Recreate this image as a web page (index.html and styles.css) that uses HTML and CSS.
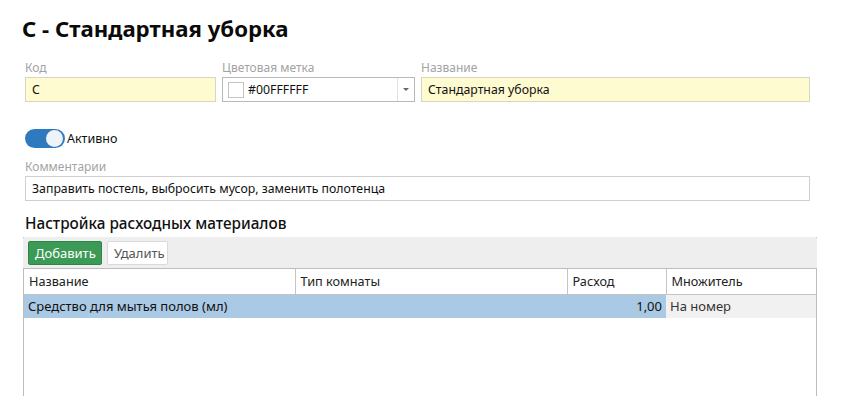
FILE: index.html
```html
<!DOCTYPE html>
<html lang="ru">
<head>
    <meta charset="UTF-8">
    <title>С - Стандартная уборка</title>
    <link rel="stylesheet" href="styles.css">
</head>
<body>
    <div class="page">
        <h1 class="title">С - Стандартная уборка</h1>

        <div class="row">
            <div class="field field-code">
                <label class="label">Код</label>
                <div class="input input-req">С</div>
            </div>
            <div class="field field-color">
                <label class="label">Цветовая метка</label>
                <div class="input select">
                    <span class="swatch"></span>
                    <span class="select-value">#00FFFFFF</span>
                    <span class="select-btn"><span class="caret"></span></span>
                </div>
            </div>
            <div class="field field-name">
                <label class="label">Название</label>
                <div class="input input-req">Стандартная уборка</div>
            </div>
        </div>

        <div class="toggle-row">
            <span class="toggle"><span class="knob"></span></span>
            <span class="toggle-text">Активно</span>
        </div>

        <div class="field field-comment">
            <label class="label">Комментарии</label>
            <div class="input">Заправить постель, выбросить мусор, заменить полотенца</div>
        </div>

        <h2 class="subtitle">Настройка расходных материалов</h2>

        <div class="grid-box">
            <div class="toolbar">
                <button class="btn btn-green">Добавить</button>
                <button class="btn btn-plain">Удалить</button>
            </div>
            <table class="table">
                <thead>
                    <tr>
                        <th class="col-name">Название</th>
                        <th class="col-type">Тип комнаты</th>
                        <th class="col-qty">Расход</th>
                        <th class="col-mult">Множитель</th>
                    </tr>
                </thead>
                <tbody>
                    <tr class="selected">
                        <td>Средство для мытья полов (мл)</td>
                        <td></td>
                        <td class="num">1,00</td>
                        <td class="ro">На номер</td>
                    </tr>
                </tbody>
            </table>
            <div class="table-empty"></div>
        </div>
    </div>
</body>
</html>
```

FILE: styles.css
```css
* {
    box-sizing: border-box;
}

body {
    margin: 0;
    background: #ffffff;
    font-family: "Noto Sans", "Open Sans", sans-serif;
    font-size: 13px;
    color: #111111;
    overflow: hidden;
}

.page {
    padding: 14px 25px 0 25px;
    width: 842px;
}

.title {
    margin: 0 0 0 -3px;
    font-size: 22.2px;
    font-weight: 700;
    line-height: 30px;
    color: #0a0a0a;
}

.row {
    display: flex;
    gap: 6px;
    margin-top: 15px;
    width: 785px;
}

.field {
    display: flex;
    flex-direction: column;
}

.field-code {
    width: 191px;
}

.field-color {
    width: 193px;
}

.field-name {
    flex: 1;
}

.label {
    font-size: 12px;
    line-height: 18px;
    color: #a3a3a3;
}

.input {
    height: 25px;
    border: 1px solid #cfcfcf;
    background: #ffffff;
    padding: 0 6px;
    font-size: 12.3px;
    line-height: 23px;
    white-space: nowrap;
}

.input-req {
    background: #fffbd0;
    border-color: #d8d6c0;
}

.select {
    display: flex;
    align-items: center;
    padding: 0 0 0 5px;
    border-color: #b9b9b9;
}

.swatch {
    width: 16px;
    height: 16px;
    border: 1px solid #c4c4c4;
    background: #ffffff;
    margin-right: 4px;
}

.select-value {
    flex: 1;
}

.select-btn {
    width: 17px;
    height: 23px;
    border-left: 1px solid #e2e2e2;
    display: flex;
    align-items: center;
    justify-content: center;
}

.caret {
    width: 0;
    height: 0;
    border-left: 3px solid transparent;
    border-right: 3px solid transparent;
    border-top: 3px solid #666666;
}

.toggle-row {
    display: flex;
    align-items: center;
    margin-top: 27px;
    height: 19px;
}

.toggle {
    width: 40px;
    height: 19px;
    border-radius: 10px;
    background: #2f79be;
    position: relative;
    display: inline-block;
}

.knob {
    position: absolute;
    right: 2px;
    top: 1px;
    width: 17px;
    height: 17px;
    border-radius: 50%;
    background: #eef3f8;
}

.toggle-text {
    margin-left: 2px;
    font-size: 12.5px;
}

.field-comment {
    margin-top: 10px;
    width: 785px;
}

.subtitle {
    margin: 11px 0 0 0;
    font-size: 15.3px;
    font-weight: 500;
    line-height: 22px;
    color: #111111;
}

.grid-box {
    margin: 3px 0 0 -2px;
    width: 794px;
    border-left: 1px solid #bdbdbd;
    border-right: 1px solid #bdbdbd;
}

.toolbar {
    background: #eeeeee;
    height: 32px;
    margin: 0 -1px;
    padding: 4px 5px;
    display: flex;
    gap: 5px;
    border-bottom: 1px solid #bdbdbd;
    border-radius: 2px 2px 0 0;
}

.btn {
    height: 24px;
    font-family: inherit;
    font-size: 13px;
    padding: 0 6px;
    border-radius: 2px;
    cursor: pointer;
}

.btn-green {
    background: #3b9a55;
    color: #ffffff;
    border: 1px solid #2f8548;
    width: 74px;
}

.btn-plain {
    background: #ffffff;
    color: #555555;
    border: 1px solid #dadada;
    width: 61px;
}

.table {
    width: 100%;
    border-collapse: collapse;
    table-layout: fixed;
}

.table th {
    font-weight: 400;
    text-align: left;
    height: 25px;
    padding: 0 5px;
    font-size: 12.7px;
    border-right: 1px solid #c4c4c4;
    border-bottom: 1px solid #c4c4c4;
    color: #222222;
}

.table th:last-child {
    border-right: none;
}

.col-name {
    width: 271px;
}

.col-type {
    width: 272px;
}

.col-qty {
    width: 99px;
}

.table td {
    height: 24px;
    padding: 0 4px;
    background: #aac9e5;
    white-space: nowrap;
}

.table td.num {
    text-align: right;
}

.table td.ro {
    background: #f1f1f1;
    color: #333333;
}

.table-empty {
    height: 80px;
}
```
